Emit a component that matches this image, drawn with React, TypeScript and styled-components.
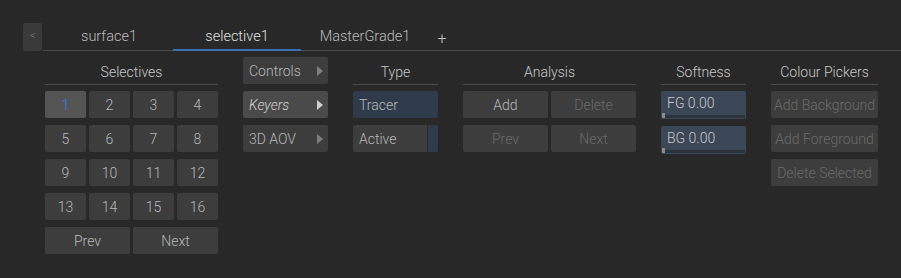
import styled, { createGlobalStyle, css } from "styled-components";

const GlobalStyle = createGlobalStyle`
    html, body {
        margin: 0;
        padding: 0;
        background: #282828;
    }
    body {
        font-family: Roboto, "Liberation Sans", sans-serif;
        font-size: 14px;
        font-weight: 300;
        color: #bdbdbd;
    }
`;

const Page = styled.div`
    width: 901px;
    height: 278px;
    box-sizing: border-box;
    padding: 23px 0 0 23px;
    display: flex;
    flex-direction: column;
`;

const TabBar = styled.div`
    display: flex;
    align-items: stretch;
    height: 28px;
`;

const BackButton = styled.div`
    width: 19px;
    height: 28px;
    background: #3a3a3a;
    border-radius: 2px;
    color: #7a7a7a;
    font-size: 11px;
    display: flex;
    align-items: center;
    justify-content: center;
    padding-bottom: 3px;
    box-sizing: border-box;
`;

const Tabs = styled.div`
    flex: 1;
    margin-left: 1px;
    display: flex;
    border-bottom: 1px solid #4a4a4a;
    padding-left: 2px;
`;

const Tab = styled.div<{ $active?: boolean }>`
    width: 128px;
    display: flex;
    align-items: center;
    justify-content: center;
    color: ${(p) => (p.$active ? "#e0e0e0" : "#bcbcbc")};
    font-size: 14.5px;
    padding-top: 1px;
    box-sizing: border-box;
    border-bottom: 2px solid ${(p) => (p.$active ? "#3a6fb8" : "transparent")};
    margin-bottom: -1px;
`;

const PlusTab = styled.div`
    width: 26px;
    display: flex;
    align-items: center;
    justify-content: center;
    font-size: 16px;
    color: #c4c4c4;
    padding-top: 4px;
`;

const Content = styled.div`
    display: flex;
    gap: 25px;
    padding: 6px 0 0 22px;
`;

const Section = styled.div<{ $width: number }>`
    width: ${(p) => p.$width}px;
    display: flex;
    flex-direction: column;
    gap: 7px;
`;

const Title = styled.div`
    height: 28px;
    margin-bottom: -1px;
    box-sizing: border-box;
    border-bottom: 1px solid #4a4a4a;
    display: flex;
    align-items: center;
    justify-content: center;
    color: #c8c8c8;
    padding-top: 3px;
`;

const Grid = styled.div<{ $cols: number }>`
    display: grid;
    grid-template-columns: repeat(${(p) => p.$cols}, 1fr);
    column-gap: 3px;
    row-gap: 7px;
`;

const Button = styled.div<{ $selected?: boolean; $disabled?: boolean; $span?: number }>`
    height: 27px;
    box-sizing: border-box;
    padding-top: 1px;
    border-radius: 2px;
    background: ${(p) => (p.$selected ? "#545454" : "#3d3d3d")};
    color: ${(p) => (p.$selected ? "#3c72c4" : p.$disabled ? "#6a6a6a" : "#b8b8b8")};
    font-weight: ${(p) => (p.$selected ? 400 : 300)};
    display: flex;
    align-items: center;
    justify-content: center;
    white-space: nowrap;
    ${(p) =>
        p.$span &&
        css`
            grid-column: span ${p.$span};
        `}
`;

const MenuButton = styled.div<{ $open?: boolean }>`
    height: 27px;
    border-radius: 2px;
    background: ${(p) => (p.$open ? "#4a4a4a" : "#3d3d3d")};
    color: ${(p) => (p.$open ? "#d4d4d4" : "#b8b8b8")};
    font-style: ${(p) => (p.$open ? "italic" : "normal")};
    display: flex;
    align-items: center;
    justify-content: space-between;
    padding: 1px 5px 0 6px;
    box-sizing: border-box;

    svg {
        fill: ${(p) => (p.$open ? "#cfcfcf" : "#7e7e7e")};
    }
`;

const TypeButton = styled.div<{ $on?: boolean }>`
    height: 27px;
    box-sizing: border-box;
    border-radius: 2px;
    overflow: hidden;
    background: ${(p) => (p.$on ? "#2f3b4b" : "#3d3d3d")};
    color: #b8b8b8;
    display: flex;
    align-items: center;
    padding: 1px 0 0 6px;
    position: relative;
`;

const ActiveFlag = styled.span`
    position: absolute;
    right: 0;
    top: 0;
    bottom: 0;
    width: 10px;
    background: #2f3b4b;
    border-left: 1px solid #262a30;
`;

const Slider = styled.div`
    height: 28px;
    box-sizing: border-box;
    border-radius: 2px;
    background: #3b4656;
    color: #cacaca;
    padding: 0 0 4px 6px;
    display: flex;
    align-items: center;
    position: relative;
`;

const SliderTrack = styled.span`
    position: absolute;
    left: 1px;
    right: 1px;
    bottom: 1px;
    height: 3px;
    background: #2c333c;
`;

const SliderHandle = styled.span`
    position: absolute;
    left: 1px;
    bottom: 1px;
    width: 3px;
    height: 5px;
    background: #8a8a8a;
`;

const Arrow = () => (
    <svg width="6" height="10" viewBox="0 0 6 10">
        <path d="M0 0 L6 5 L0 10 Z" />
    </svg>
);

export default function App() {
    const numbers = Array.from({ length: 16 }, (_, i) => i + 1);

    return (
        <>
            <GlobalStyle />
            <Page>
                <TabBar>
                    <BackButton>&lt;</BackButton>
                    <Tabs>
                        <Tab>surface1</Tab>
                        <Tab $active>selective1</Tab>
                        <Tab>MasterGrade1</Tab>
                        <PlusTab>+</PlusTab>
                    </Tabs>
                </TabBar>
                <Content>
                    <Section $width={173}>
                        <Title>Selectives</Title>
                        <Grid $cols={4}>
                            {numbers.map((n) => (
                                <Button key={n} $selected={n === 1}>
                                    {n}
                                </Button>
                            ))}
                            <Button $span={2}>Prev</Button>
                            <Button $span={2}>Next</Button>
                        </Grid>
                    </Section>
                    <Section $width={85}>
                        <MenuButton>
                            Controls <Arrow />
                        </MenuButton>
                        <MenuButton $open>
                            Keyers <Arrow />
                        </MenuButton>
                        <MenuButton>
                            3D AOV <Arrow />
                        </MenuButton>
                    </Section>
                    <Section $width={85}>
                        <Title>Type</Title>
                        <TypeButton $on>Tracer</TypeButton>
                        <TypeButton>
                            Active
                            <ActiveFlag />
                        </TypeButton>
                    </Section>
                    <Section $width={173}>
                        <Title>Analysis</Title>
                        <Grid $cols={2}>
                            <Button>Add</Button>
                            <Button $disabled>Delete</Button>
                            <Button $disabled>Prev</Button>
                            <Button $disabled>Next</Button>
                        </Grid>
                    </Section>
                    <Section $width={85}>
                        <Title>Softness</Title>
                        <Slider>
                            FG 0.00
                            <SliderTrack />
                            <SliderHandle />
                        </Slider>
                        <Slider>
                            BG 0.00
                            <SliderTrack />
                            <SliderHandle />
                        </Slider>
                    </Section>
                    <Section $width={107}>
                        <Title>Colour Pickers</Title>
                        <Button $disabled>Add Background</Button>
                        <Button $disabled>Add Foreground</Button>
                        <Button $disabled>Delete Selected</Button>
                    </Section>
                </Content>
            </Page>
        </>
    );
}
